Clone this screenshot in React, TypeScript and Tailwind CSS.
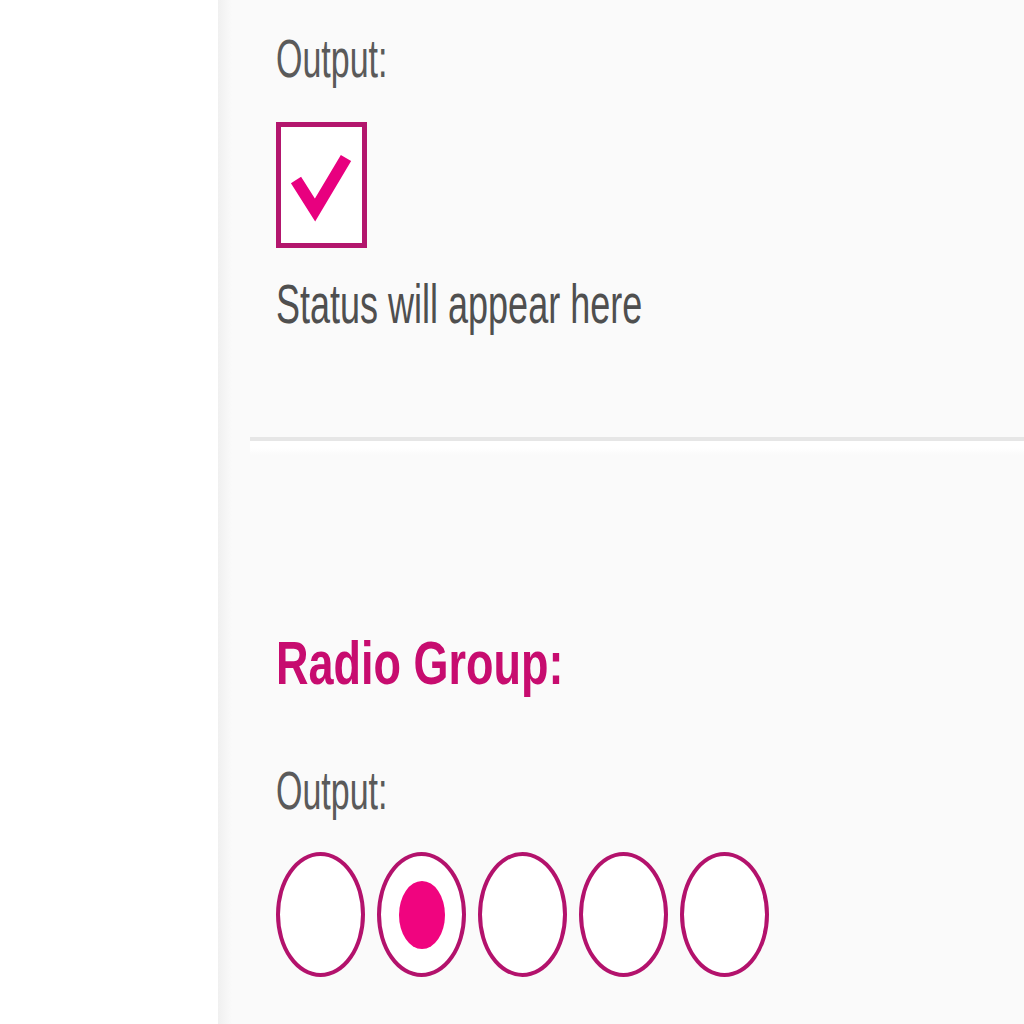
import React from "react";

function Stretched({
  children,
  className,
}: {
  children: React.ReactNode;
  className: string;
}) {
  return (
    <span className={"inline-block origin-top-left whitespace-nowrap leading-none " + className}>
      {children}
    </span>
  );
}

export default function App() {
  const radios = [false, true, false, false, false];
  return (
    <div className="flex h-[1024px] w-[1024px] overflow-hidden bg-white font-['Liberation_Sans',Arial,sans-serif]">
      <div className="w-[218px] shrink-0 bg-white" />
      <div className="w-[14px] shrink-0 bg-gradient-to-r from-[#f0f0f0] to-[#fafafa]" />
      <main className="flex flex-1 flex-col bg-[#fafafa] pl-[18px]">
        <div className="pl-[26px]">
          <div className="mt-[31px] h-[60px]">
            <Stretched className="scale-y-[1.6] text-[34px] text-[#5a5a5a]">Output:</Stretched>
          </div>
          <div className="mt-[31px] flex h-[126px] w-[91px] items-center justify-center border-[5px] border-[#b3166d] bg-white">
            <svg width="60" height="60" viewBox="0 0 60 60" className="-ml-[2px] mt-[2px] overflow-visible">
              <polyline
                points="5,24 24,54 55,2"
                fill="none"
                stroke="#e8007f"
                strokeWidth="12"
                strokeLinejoin="miter"
              />
            </svg>
          </div>
          <div className="mt-[28px] h-[60px]">
            <Stretched className="scale-y-[1.55] text-[36px] text-[#4f4f4f]">Status will appear here</Stretched>
          </div>
        </div>

        <div className="mt-[101px] h-[4px] bg-[#e6e6e6]" />
        <div className="h-[14px] bg-gradient-to-b from-white via-white to-[#fafafa]" />

        <div className="pl-[26px]">
          <div className="mt-[177px] h-[70px]">
            <Stretched className="scale-y-[1.37] text-[45px] font-bold text-[#c70c6f]">Radio Group:</Stretched>
          </div>
          <div className="mt-[61px] h-[60px]">
            <Stretched className="scale-y-[1.6] text-[34px] text-[#5a5a5a]">Output:</Stretched>
          </div>
          <div className="mt-[29px] flex gap-[12px]">
            {radios.map((on, i) => (
              <div
                key={i}
                className="flex h-[125px] w-[89px] items-center justify-center rounded-[50%] border-4 border-[#b3126c] bg-white"
              >
                {on && <div className="h-[68px] w-[46px] rounded-[50%] bg-[#f0047f]" />}
              </div>
            ))}
          </div>
        </div>
      </main>
    </div>
  );
}
